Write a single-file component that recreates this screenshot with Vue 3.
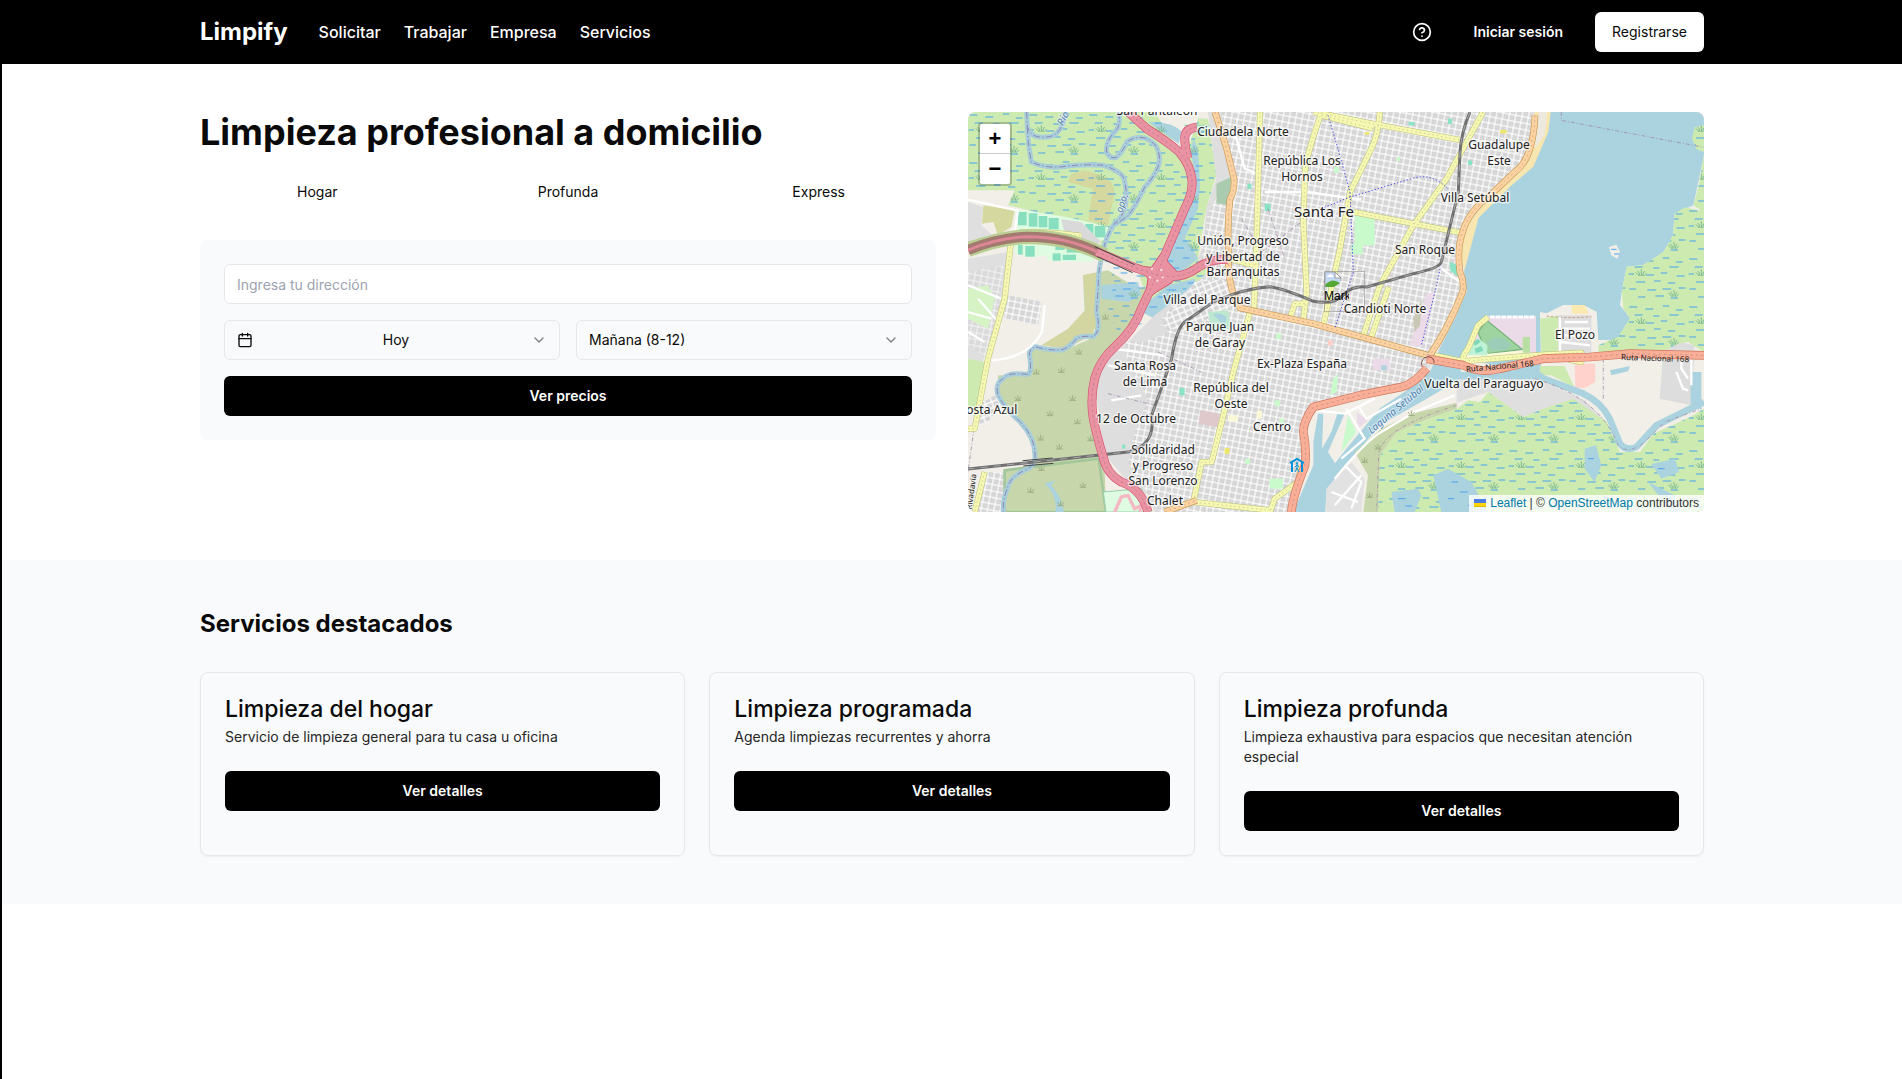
<script setup>
import { ref } from 'vue'

const links = ['Solicitar', 'Trabajar', 'Empresa', 'Servicios']
const kinds = ['Hogar', 'Profunda', 'Express']
const address = ref('')
const day = ref('Hoy')
const slot = ref('Mañana (8-12)')

const services = [
  { title: 'Limpieza del hogar', text: 'Servicio de limpieza general para tu casa u oficina' },
  { title: 'Limpieza programada', text: 'Agenda limpiezas recurrentes y ahorra' },
  { title: 'Limpieza profunda', text: 'Limpieza exhaustiva para espacios que necesitan atención especial' },
]

// Place names: centre x, first baseline, lines
const places = [
  [189, 3, ['San Pantaleón']],
  [275, 24, ['Ciudadela Norte']],
  [334, 53, ['República Los', 'Hornos']],
  [275, 133, ['Unión, Progreso', 'y Libertad de', 'Barranquitas']],
  [239, 192, ['Villa del Parque']],
  [531, 37, ['Guadalupe', 'Este']],
  [507, 90, ['Villa Setúbal']],
  [457, 142, ['San Roque']],
  [417, 201, ['Candioti Norte']],
  [252, 219, ['Parque Juan', 'de Garay']],
  [334, 256, ['Ex-Plaza España']],
  [177, 258, ['Santa Rosa', 'de Lima']],
  [263, 280, ['República del', 'Oeste']],
  [168, 311, ['12 de Octubre']],
  [304, 319, ['Centro']],
  [195, 342, ['Solidaridad', 'y Progreso', 'San Lorenzo']],
  [197, 393, ['Chalet']],
  [20, 302, ['Costa Azul']],
  [607, 227, ['El Pozo']],
  [516, 276, ['Vuelta del Paraguayo']],
]

const water = [
  'M176 0L178 45Q190 75 216 75Q250 78 266 64Q290 40 292 0',
  'M178 45Q180 100 190 150Q230 168 276 165Q350 155 406 160Q470 180 470 210Q480 250 470 290Q460 320 440 334Q410 380 406 419Q390 470 391 519Q388 560 386 600Q400 660 375 674Q345 670 326 679Q300 712 276 714Q240 715 201 704Q178 715 186 739Q192 789 176 787Q120 780 106 799Q80 815 90 849Q110 890 156 929Q200 975 201 1029Q205 1060 170 1075Q125 1095 118 1130Q104 1160 106 1200',
  'M450 0Q460 25 448 50Q410 90 416 120Q425 142 446 136Q470 110 476 90Q500 72 530 78Q560 90 568 110Q580 140 570 165Q555 200 530 225Q500 290 476 315L440 338',
]

const motorways = [
  'M480 0L536 50Q600 90 634 120Q668 160 672 205Q675 245 650 290L616 370Q590 430 572 475Q550 530 520 590Q500 650 440 705Q395 745 380 800Q366 860 376 920Q386 970 404 1030Q415 1085 460 1110Q520 1130 540 1200',
  'M686 46Q650 50 650 80Q650 110 660 140',
  'M386 419L506 469L566 489Q640 505 690 466Q730 440 780 442',
]

const primaries = [
  'M741 0Q760 60 776 110L798 200Q800 240 786 260Q778 330 781 400V460Q785 540 816 588L1036 635L1376 729',
  'M1701 10Q1700 60 1686 110Q1670 160 1640 180L1566 250Q1500 300 1484 360Q1466 410 1476 480Q1490 510 1484 540Q1440 650 1386 729',
  'M590 1200L686 1165',
]

const secondaries = [
  'M876 0L866 380L858 590',
  'M1061 0Q1015 130 1011 180L1006 330L1016 540L1006 625',
  'M1236 0Q1230 70 1210 110L1146 240L1116 410L1066 640',
  'M1545 0L1436 200L1336 340L1236 520L1186 670',
  'M1262 525L1208 680',
  'M1036 0L1240 40L1476 84',
  'M1060 10L1216 50',
  'M1156 300L1476 362',
  'M780 440L860 460',
  'M846 600L796 780L766 910L731 1050L701 1050L676 1170L906 1195',
  'M1010 575H980L966 620',
  'M0 399Q110 366 176 360Q240 358 340 372',
  'M130 380L110 560L60 740L20 950H0',
  'M1400 730L1486 748L1726 728L1840 722V750L1800 742',
  'M1486 748Q1480 735 1500 710L1530 640L1560 615',
  'M50 1080L20 1200',
  'M1000 1060L990 1110L920 1160L906 1200',
]

const trunks = [
  'M1376 769Q1340 815 1300 825L1176 850L1036 885Q1005 930 1006 960Q1016 1010 1011 1060Q975 1150 970 1200',
  'M1376 740L1486 760Q1540 785 1596 770L1726 740L1866 735L1986 725L2208 730',
]

const rails = [
  'M1506 0Q1480 60 1476 120L1471 240L1420 450Q1416 468 1336 485L1196 525Q1155 520 1130 545Q1100 580 1036 568Q950 530 906 524Q830 528 736 570L650 630Q625 650 611 740L576 840L551 910Q560 980 516 1005L486 1019L256 1044L0 1071',
]

// Short white lanes outside of the regular street grid
const lanes = [
  'M0 263L150 296L138 370',
  'M0 520L100 560M0 600L70 620M30 560L100 640M0 660L50 690',
  'M230 579L222 660Q180 740 70 745',
  'M890 240H1010L1180 262M800 60L830 170L880 190',
  'M420 760L560 790M430 710L590 730M430 865L520 850',
  'M1040 895L1130 905L1220 860M1135 890L1190 980L1120 1040M1170 880L1195 920L1300 860',
  'M1100 1100Q1200 980 1240 960L1340 900L1460 850',
  'M1130 1060L1180 1110L1150 1190M1090 1140L1170 1170M1180 1090L1100 1180',
  'M1420 470L1490 520',
  'M2140 730V770L2160 800M2125 780L2145 830L2160 835M2170 720V820',
  'M1790 630H1860M1786 650H1866M1790 670H1860M1780 690L1866 700M1776 615V720',
]

const dotted = [
  'M1080 10L1110 110L1146 240L1156 480L1100 650',
  'M1060 290L1146 255L1330 200Q1390 180 1440 230',
  'M1416 470L1406 520L1360 700',
]
const boundaries = [
  'M1780 0V25L2208 106',
  'M900 290L950 440M880 420L1000 330M820 320L900 450',
  'M1906 740V860M18 950L0 1080',
  'M1466 880Q1236 950 1232 1030L1226 1200',
  'M1700 800Q1900 860 1950 1000Q1980 1030 2030 990L2090 930L2200 890',
  'M420 845L560 880M570 720L700 780',
]

const parks = [
  [1160, 310, 60, 90, '#c8facc'], [1150, 395, 34, 32, '#c8facc'], [890, 275, 18, 22, '#8ae3c5'],
  [838, 215, 12, 16, '#8ae3c5'], [1098, 165, 14, 18, '#c8facc'], [1440, 20, 12, 16, '#8ae3c5'],
  [1322, 30, 18, 10, '#8ae3c5'], [925, 665, 14, 16, '#c8facc'], [1080, 685, 14, 16, '#ffd0c8'],
  [1215, 740, 50, 34, '#ebdbe8'], [1240, 760, 16, 14, '#aad3df'], [920, 865, 16, 18, '#c8facc'],
  [934, 920, 14, 14, '#c8facc'], [770, 1008, 14, 18, '#eee86a'], [832, 1040, 14, 16, '#c8facc'],
  [780, 910, 30, 18, '#fbf8d8'], [866, 896, 16, 24, '#fbf8d8'], [634, 828, 16, 22, '#8ae3c5'],
  [462, 998, 10, 12, '#8ae3c5'], [1190, 60, 14, 8, '#eee86a'], [1286, 135, 10, 12, '#c8facc'],
  [905, 1100, 40, 30, '#c8facc'], [1140, 1060, 16, 14, '#8ae3c5'], [1596, 54, 20, 10, '#eee86a'],
  [1640, 84, 10, 10, '#c8facc'], [1500, 145, 12, 14, '#8ae3c5'], [1836, 690, 10, 12, '#eee86a'],
]

const fields = [
  [150, 300, 26, 40], [182, 304, 26, 40], [212, 312, 26, 34], [242, 318, 30, 34], [352, 336, 24, 34],
  [380, 342, 32, 34], [150, 398, 14, 30], [172, 402, 28, 32], [262, 398, 28, 16], [296, 402, 40, 20],
  [254, 424, 24, 22], [284, 428, 40, 16],
]

const scrubMarks = [
  [205, 785], [280, 780], [150, 864], [314, 864], [246, 910], [328, 934], [218, 983], [274, 1010],
  [368, 985], [220, 1074], [345, 1125], [188, 1140], [278, 1180], [412, 620], [333, 725],
  [1330, 910], [1230, 1010], [1190, 1050], [1205, 1155],
]
</script>

<template>
  <div class="page">
    <header class="topbar">
      <div class="container bar">
        <nav class="nav" aria-label="Principal">
          <a class="brand" href="#">Limpify</a>
          <a v-for="l in links" :key="l" class="nav-link" href="#">{{ l }}</a>
        </nav>
        <div class="account">
          <button class="help" type="button" aria-label="Ayuda">
            <svg width="20" height="20" viewBox="0 0 24 24" fill="none" stroke="currentColor" stroke-width="2" stroke-linecap="round" stroke-linejoin="round">
              <circle cx="12" cy="12" r="10" />
              <path d="M9.09 9a3 3 0 0 1 5.83 1c0 2-3 3-3 3" />
              <path d="M12 17h.01" />
            </svg>
          </button>
          <button class="login" type="button">Iniciar sesión</button>
          <button class="signup" type="button">Registrarse</button>
        </div>
      </div>
    </header>

    <main>
      <section class="container hero">
        <div class="booking">
          <h1>Limpieza profesional a domicilio</h1>
          <div class="kinds">
            <button v-for="k in kinds" :key="k" type="button">{{ k }}</button>
          </div>
          <form class="quote" @submit.prevent>
            <input v-model="address" class="field" type="text" placeholder="Ingresa tu dirección" aria-label="Dirección" />
            <div class="pair">
              <div class="picker">
                <svg class="cal" width="16" height="16" viewBox="0 0 24 24" fill="none" stroke="currentColor" stroke-width="2" stroke-linecap="round" stroke-linejoin="round">
                  <path d="M8 2v4M16 2v4M3 10h18" />
                  <rect x="3" y="4" width="18" height="18" rx="2" />
                </svg>
                <select v-model="day" class="field day" aria-label="Día">
                  <option>Hoy</option>
                </select>
                <svg class="chev" width="16" height="16" viewBox="0 0 24 24" fill="none" stroke="currentColor" stroke-width="2" stroke-linecap="round" stroke-linejoin="round">
                  <path d="m6 9 6 6 6-6" />
                </svg>
              </div>
              <div class="picker">
                <select v-model="slot" class="field" aria-label="Horario">
                  <option>Mañana (8-12)</option>
                </select>
                <svg class="chev" width="16" height="16" viewBox="0 0 24 24" fill="none" stroke="currentColor" stroke-width="2" stroke-linecap="round" stroke-linejoin="round">
                  <path d="m6 9 6 6 6-6" />
                </svg>
              </div>
            </div>
            <button class="solid" type="submit">Ver precios</button>
          </form>
        </div>

        <div class="map">
          <svg class="tiles" viewBox="0 0 736 400" preserveAspectRatio="xMidYMid slice">
            <defs>
              <pattern id="blocks" width="19" height="19" patternUnits="userSpaceOnUse" patternTransform="rotate(11)">
                <rect width="19" height="19" fill="#fff" />
                <rect x="2" y="2" width="15" height="15" fill="#c6c4c4" />
                <rect x="3" y="3" width="13" height="13" fill="#d8d7d7" />
              </pattern>
              <pattern id="blocks2" width="20" height="17" patternUnits="userSpaceOnUse" patternTransform="rotate(-22)">
                <rect width="20" height="17" fill="#fff" />
                <rect x="2" y="2" width="16" height="13" fill="#d6d5d5" />
              </pattern>
              <pattern id="marsh" width="180" height="144" patternUnits="userSpaceOnUse">
                <path d="M4 9h24M52 15h24M104 6h20M144 18h20M20 33h24M76 36h18M124 33h28M2 54h16M54 57h24M98 51h20M146 60h24M24 78h28M78 75h20M120 81h22M4 99h20M58 102h26M104 99h26M152 96h20M30 123h22M82 120h26M128 126h22" stroke="#4aa3ee" stroke-width="3" fill="none" />
                <g fill="none" stroke="#7db893" stroke-width="3">
                  <path d="M36 60q-1-10-7-15M40 60V40M44 60q0-10 6-15M33 60q-4-8-10-10M47 60q4-6 8-8" />
                  <path d="M134 122q-1-10-7-15M138 122V102M142 122q0-10 6-15M131 122q-4-8-10-10M145 122q4-6 8-8" />
                </g>
              </pattern>
            </defs>

            <g transform="scale(.333333)">
              <rect width="2208" height="1200" fill="#f2efe9" />

              <path d="M0 0H560L650 140L690 20H720L745 190L715 290L690 440L730 480L640 540L540 570L500 450L390 420L410 350L290 320L120 280L140 235L0 235Z" fill="#cdebb0" />
              <path d="M310 185L350 175L400 190L430 210L440 240L420 340L360 325L375 230L300 210Z" fill="#d6d99f" />
              <path d="M345 490L420 475L510 530L560 520L520 620L400 740L365 830L370 930L400 1030L410 1060L414 1200H110V1075L200 1065L205 1000L140 920L90 840L90 790H180L185 710L290 715L390 670L350 600Z" fill="#c8d7ab" />
              <path d="M345 490L400 478L388 600L375 670L290 710L220 700L300 650L355 590Z" fill="#d3d6a0" />
              <path d="M540 30Q620 30 640 60L632 95Z" fill="#aad3df" />
              <path d="M650 40H730L736 60L690 56Z" fill="#c5f0dd" stroke="#8fcfae" stroke-width="3" />
              <path d="M676 80L690 110L696 220L690 290L650 380L670 400L690 440L640 480L592 470L596 420L640 330L672 250L682 190L668 120Z" fill="#aad3df" />
              <path d="M540 570L600 520L680 500L690 540L620 600L560 620L520 600Z" fill="#aad3df" />
              <path d="M400 520L510 510L520 550L480 570L400 560Z" fill="#aad3df" />
              <path d="M0 0H560L650 140L690 20H720L745 190L715 290L690 440L730 480L640 540L540 620L460 680L420 600L440 500L400 440L410 350L290 320L120 280L140 235L0 235Z" fill="url(#marsh)" />
              <path d="M140 290L300 316L420 345L412 385L150 360Z" fill="#dffce2" />
              <path d="M140 392L350 410L380 435L376 450L240 446L236 430L200 434L140 425Z" fill="#dffce2" />
              <rect v-for="(f, i) in fields" :key="'f' + i" :x="f[0]" :y="f[1]" :width="f[2]" :height="f[3]" fill="#88dfbf" />
              <path d="M46 280L140 295L130 345L90 370L76 330L42 335Z" fill="#d6d99f" />
              <path d="M280 322L340 330L400 390L380 400L290 365Z" fill="#dad9d9" />
              <path d="M0 270L46 285L40 340L90 385L0 400ZM0 440L120 420L100 580L40 760L0 770Z" fill="#e0dfdf" />
              <path d="M112 548L222 570L210 640L108 620Z" fill="url(#blocks)" />
              <path d="M0 480L110 460L90 600L60 740L0 700Z" fill="url(#blocks)" opacity=".6" />
              <path d="M0 530L60 520L80 560L60 650L0 620Z" fill="#d5f3c4" />
              <path d="M0 740L50 750L36 880L0 890Z" fill="#cdebb0" />
              <path d="M30 880L80 850L98 880L60 930L30 940Z" fill="url(#blocks2)" />
              <path d="M44 1080H108V1200H30Z" fill="url(#blocks)" />
              <path d="M110 1075L392 1040L414 1200H110Z" fill="none" stroke="#a3c79b" stroke-width="8" />
              <path d="M230 1115L262 1105L250 1120Q290 1170 286 1200H262Q270 1150 230 1115Z" fill="#aad3df" />

              <path d="M720 0L735 120L745 200L715 290L705 400L690 440L720 480L640 550L560 610L480 690L400 760L385 850L400 960L420 1040L480 1110L540 1150L560 1200H960L1000 1100L1020 950L1040 890L1320 830L1410 740L1490 560L1480 470L1520 330L1620 220L1690 160L1740 50V0Z" fill="#dfdede" />
              <path d="M760 0L790 190L720 300L705 400L700 440L730 480L640 550L580 620L600 660L530 690L470 690L480 760L540 860L500 960L480 1050L530 1130L560 1180L580 1200H960L1000 1100L1000 950L1040 890L1320 830L1400 740L1480 560L1470 470L1500 330L1600 220L1670 160L1690 50V0Z" fill="url(#blocks)" />
              <path d="M680 510L790 500L800 580L640 660L580 640L640 560Z" fill="url(#blocks2)" />
              <path d="M745 215L790 195L784 280L746 274Z" fill="#aacbaf" />
              <path d="M720 600L780 595L790 650L730 660Z" fill="#bde8cf" />
              <path d="M736 606Q760 600 776 615L770 640Q745 620 736 606Z" fill="#aad3df" />
              <path d="M696 895L756 905L750 945L692 935Z" fill="#dfc9cb" />
              <path d="M1376 545L1400 540L1362 705L1324 700Z" fill="#ebdbe8" />
              <path d="M1336 620L1362 560L1356 640L1340 660Z" fill="#c9c8b4" />
              <path d="M1444 450L1474 460L1472 495L1448 478Z" fill="#8ae3c5" />
              <path d="M1700 0H1750L1745 60L1700 165L1630 225L1534 320L1514 400L1490 478L1480 440L1490 350L1560 260L1660 175L1690 110Z" fill="#f7e6b0" />
              <path d="M1712 0H1738L1730 70L1700 110Z" fill="#eee9df" />
              <rect v-for="(p, i) in parks" :key="'p' + i" :x="p[0]" :y="p[1]" :width="p[2]" :height="p[3]" :fill="p[4]" />
              <path d="M1096 800L1110 786L1106 840L1086 850Z" fill="#c8facc" />

              <path d="M1748 0L1741 59L1696 164L1626 224L1531 319L1510 400L1488 479L1496 539L1466 610L1416 709L1386 779L1326 829L1236 889L1136 1009L1101 1054L1080 1020L1130 905H1108L1090 960L1062 1010L1066 905H1050L1036 990V1060L976 1200H1072L1076 1130L1176 1010L1236 940L1376 860L1466 808H1720L1716 600L1736 604L1786 579H1846L1886 599L1891 684H1946L1986 619L1956 579L1961 539L1976 464L2026 459L2086 420L2115 370L2120 305L2176 280L2208 130V0Z" fill="#aad3df" />
              <path d="M1486 740L1526 640L1560 612H1704V725L1600 745L1486 752Z" fill="#ebdbe8" />
              <path d="M1556 625L1662 712L1560 725L1546 700L1530 660Z" fill="#9fd3a0" stroke="#78b57d" stroke-width="4" />
              <path d="M1555 690Q1600 660 1630 700L1610 715H1570Z" fill="#9bcdb8" />
              <path d="M1490 730L1530 680L1560 725L1670 715L1680 740L1500 750Z" fill="#fbf8d8" />
              <path d="M1510 700L1534 680L1558 700V730H1500Z" fill="#bff2d7" />
              <path d="M1520 710L1540 702L1546 716L1524 724ZM1516 690L1530 680L1538 690L1520 702Z" fill="#7fd9b8" />
              <path d="M1566 615H1700" stroke="#fff" stroke-width="9" stroke-dasharray="14 3" />
              <path d="M1664 675H1686V722H1664Z" fill="#b9e0a2" />
              <path d="M1716 620L1770 612V725H1720Z" fill="#cdebb0" />
              <path d="M1770 610H1870V725H1770Z" fill="#dedddd" />
              <path d="M1810 579H1850L1862 605H1812Z" fill="#fbe9b0" />
              <path d="M1736 612Q1790 620 1870 614" stroke="#c0a080" stroke-width="3" stroke-dasharray="8 5" fill="none" />
              <path d="M1466 770L1700 785L1716 800L1466 808Z" fill="#aad3df" />
              <path d="M1470 745H1520L1640 775L1480 780Z" fill="#f2efe9" />
              <path d="M1466 802H1710L1850 865L1920 935L1820 870L1726 890L1666 915L1561 840L1466 872Z" fill="#e0dfdf" />
              <path d="M2075 860L2086 720L2140 690L2180 700L2172 880Z" fill="#dedddd" />
              <path d="M1820 755H1882V810L1850 828H1822Z" fill="#ffd2cc" />
              <path d="M1926 775L1986 762L1980 778L1930 790Z" fill="#aad3df" />
              <path d="M1716 762H1790L1820 828L1750 790H1716Z" fill="#cdebb0" />
              <path d="M1923 405L1945 398L1956 420L1948 440L1930 430Z" fill="#f2efe9" />
              <path d="M1930 412h16M1938 426h16" stroke="#4aa3ee" stroke-width="3" />

              <g v-for="paint in ['#cdebb0', 'url(#marsh)']" :key="paint" :fill="paint">
                <path d="M2208 40L2180 46L2172 80L2186 112L2208 120Z" />
                <path d="M2208 130L2190 230L2176 280L2200 296L2150 286L2120 305L2115 370L2086 420L2026 459L1976 464L1961 539L1966 590L1986 619L1950 675L1891 700V725L2080 722L2130 695L2160 690L2208 720Z" />
                <path d="M1232 1079L1236 1030L1286 960L1386 919L1466 890L1501 865L1536 870L1561 840L1666 915L1726 890L1816 860L1916 930L1956 1020H2016L2056 965L2166 915L2208 890V1200H1230Z" />
              </g>
              <path d="M1396 1090L1440 1070L1510 1110L1560 1200H1420ZM1270 1140L1350 1130L1360 1150L1340 1200H1280ZM1850 1010L1884 1000L1900 1060L1880 1110L1850 1070ZM2050 1056L2120 1040L2134 1080L2080 1100ZM2040 1110L2120 1150L2140 1200H2110Z" fill="#aad3df" />
              <path d="M1290 1160h22M1312 1182h20M1450 1110h20M1476 1140h24M1440 1160h18M1500 1180h20M1860 1040h18M2070 1070h20" stroke="#4aa3ee" stroke-width="3" />
              <path d="M1186 1200L1200 1090L1160 1020L1240 950L1330 905L1466 872V890L1386 919L1286 960L1236 1030L1230 1200Z" fill="#c8d7ab" />
              <path d="M1076 1130L1150 1050L1190 1100L1180 1200H1072Z" fill="#e3e2e2" />
              <path d="M1140 910L1165 960L1120 1020Z" fill="#c8facc" />
              <path d="M1165 900L1200 925L1170 950Z" fill="#ebdbe8" />
              <path d="M1695 779L1726 799L1846 845Q1900 870 1925 920L1956 995Q1976 1020 2006 1004L2066 940L2166 890L2208 870" fill="none" stroke="#aad3df" stroke-width="20" />
              <path d="M2184 780V890" stroke="#aad3df" stroke-width="32" />
              <path d="M406 1140L520 1130L550 1200H414Z" fill="#dffce2" stroke="#9bcfae" stroke-width="3" />
              <path d="M440 1200L460 1155L480 1150L500 1190L520 1180L515 1200" fill="none" stroke="#f3b8c4" stroke-width="10" />

              <g fill="none" stroke-linejoin="round">
                <path v-for="d in water" :key="d" :d="d" stroke="#a8cddb" stroke-width="15" />
                <path v-for="d in water" :key="'b' + d" :d="d" stroke="#8f86b0" stroke-width="3" stroke-dasharray="20 7 4 7" />
                <path v-for="d in lanes" :key="d" :d="d" stroke="#fff" stroke-width="7" />
                <path v-for="d in boundaries" :key="d" :d="d" stroke="#a08aa8" stroke-width="3" stroke-dasharray="12 6 3 6" opacity=".8" />

                <path v-for="d in secondaries" :key="'c' + d" :d="d" stroke="#b9bd7c" stroke-width="18" />
                <path v-for="d in secondaries" :key="d" :d="d" stroke="#f5f8b0" stroke-width="15" />
                <path v-for="d in secondaries" :key="'d' + d" :d="d" stroke="#cfc79a" stroke-width="3" stroke-dasharray="4 9" />
                <path v-for="d in primaries" :key="'c' + d" :d="d" stroke="#c79a58" stroke-width="20" />
                <path v-for="d in primaries" :key="d" :d="d" stroke="#fbd2a0" stroke-width="16" />
                <path v-for="d in primaries" :key="'d' + d" :d="d" stroke="#d5ac8c" stroke-width="3" stroke-dasharray="6 9" />
                <path v-for="d in dotted" :key="d" :d="d" stroke="#4848e8" stroke-width="3" stroke-dasharray="4 6" />

                <path v-for="d in rails" :key="d" :d="d" stroke="#707070" stroke-width="9" />
                <path v-for="d in rails" :key="'w' + d" :d="d" stroke="#c4c4c4" stroke-width="2" stroke-dasharray="22 18" />
                <path d="M164 1046L254 1038M166 1062L256 1054" stroke="#444" stroke-width="3" />

                <path v-for="d in trunks" :key="'c' + d" :d="d" stroke="#cf7358" stroke-width="26" />
                <path v-for="d in trunks" :key="d" :d="d" stroke="#f8ae97" stroke-width="22" />
                <path v-for="d in trunks" :key="'d' + d" :d="d" stroke="#cf9080" stroke-width="3" stroke-dasharray="6 10" />
                <path d="M1362 764Q1356 738 1380 734Q1400 736 1398 752" stroke="#7c4a40" stroke-width="3" />

                <path d="M0 414Q90 378 176 374Q300 374 410 430" stroke="#b9cf94" stroke-width="44" />
                <path d="M0 414Q90 378 176 374Q300 374 396 424" stroke="#a37a70" stroke-width="30" />
                <path d="M0 414Q90 378 176 374Q300 374 396 424" stroke="#dd8796" stroke-width="9" />
                <path v-for="d in motorways" :key="'c' + d" :d="d" stroke="#d55673" stroke-width="27" />
                <path d="M506 462L550 466L582 420L600 450L630 482L612 512L566 540L530 566L540 500Z" fill="#e892a2" stroke="#d25472" stroke-width="3" />
                <path v-for="d in motorways" :key="d" :d="d" stroke="#e892a2" stroke-width="23" />
                <path v-for="d in motorways" :key="'d' + d" :d="d" stroke="#c27890" stroke-width="3" stroke-dasharray="6 10" />
                <path d="M380 404L500 458M388 434L494 482" stroke="#444" stroke-width="3" />
                <path d="M552 470h.1M580 474h.1M546 496h.1M568 506h.1M584 496h.1" stroke="#f6dfe3" stroke-width="7" stroke-linecap="round" />
                <path v-for="(s, i) in scrubMarks" :key="i" :d="`M${s[0]} ${s[1]}v-14m-3 14q-2-7-7-9m13 9q2-7 7-9m-20 10h20`" stroke="#9db083" stroke-width="3" />
              </g>
            </g>

            <g class="places">
              <text v-for="p in places" :key="p[2][0]" :x="p[0]" :y="p[1]">
                <tspan v-for="(line, i) in p[2]" :key="line" :x="p[0]" :y="p[1] + Math.round(i * 15.5)">{{ line }}</tspan>
              </text>
              <text class="city" x="356" y="105">Santa Fe</text>
            </g>
            <text class="road" transform="translate(532 257) rotate(-5)">Ruta Nacional 168</text>
            <text class="road" transform="translate(687 249) rotate(2)">Ruta Nacional 168</text>
            <text class="road" transform="translate(6 380) rotate(-82)">Rivadavia</text>
            <text class="river" transform="translate(430 300) rotate(-40)">Laguna Setúbal</text>
            <text class="river" transform="translate(98 8) rotate(-62)">Río</text>
            <text class="river" transform="translate(157 92) rotate(-72)">opo,</text>

            <g transform="translate(322 346)" fill="none" stroke="#0092da">
              <path d="M0 5L7 1L14 5M2 4V14M12 4V14" stroke-width="2" />
              <path d="M7 6V10L5 14M7 10L9 14M5 9L7 7L9 9" stroke-width="1" />
              <circle cx="7" cy="5" r="1" fill="#0092da" stroke="none" />
            </g>
          </svg>

          <div class="pin">
            <div class="pin-shadow"></div>
            <svg width="18" height="17" viewBox="0 0 18 17">
              <path d="M1 1H11L17 7V10L13 13L10 16H1Z" fill="#c5d8f5" />
              <path d="M3 6Q3 4 5 4Q6 2 8 4Q10 4 9 6Z" fill="#fff" />
              <path d="M1 16V14Q8 6 16 12L10 16Z" fill="#56a836" />
              <path d="M1 16V1H11L17 7V10" fill="none" stroke="#a8a8a8" />
              <path d="M11 1V7H17Z" fill="#fff" stroke="#999" />
            </svg>
            <span>Mark</span>
          </div>

          <div class="zoom">
            <button type="button" aria-label="Acercar">+</button>
            <button type="button" aria-label="Alejar">−</button>
          </div>

          <div class="credit">
            <svg width="12" height="8" viewBox="0 0 12 8"><path fill="#4C7BE1" d="M0 0h12v4H0z" /><path fill="#FFD500" d="M0 4h12v3H0z" /><path fill="#E0BC00" d="M0 7h12v1H0z" /></svg>
            <a href="#">Leaflet</a> | © <a href="#">OpenStreetMap</a> contributors
          </div>
        </div>
      </section>

      <section class="featured">
        <div class="container">
          <h2>Servicios destacados</h2>
          <div class="cards">
            <article v-for="s in services" :key="s.title" class="card">
              <h3>{{ s.title }}</h3>
              <p>{{ s.text }}</p>
              <button class="solid" type="button">Ver detalles</button>
            </article>
          </div>
        </div>
      </section>
    </main>
  </div>
</template>

<style>
body {
  background: #fff;
}
</style>

<style scoped>
.page,
.page * {
  box-sizing: border-box;
}
.page {
  min-height: 100vh;
  border-left: 2px solid #000;
  background: #fff;
  color: #0a0a0a;
  font: 14px/20px Inter, "Liberation Sans", sans-serif;
}
button,
input,
select {
  font: inherit;
  color: inherit;
}
button {
  border: 0;
  background: none;
  padding: 0;
  cursor: pointer;
}
h1,
h2,
h3,
p {
  margin: 0;
}
.container {
  max-width: 1536px;
  margin: 0 auto;
  padding: 0 16px;
}

.topbar {
  background: #000;
  color: #fff;
}
.bar {
  height: 64px;
  display: flex;
  align-items: center;
  justify-content: space-between;
}
.nav {
  display: flex;
  align-items: center;
  gap: 23px;
}
.nav a {
  color: #fff;
  text-decoration: none;
}
.brand {
  font-size: 24px;
  line-height: 32px;
  font-weight: 700;
  margin-right: 8px;
}
.nav-link {
  font-size: 16px;
  line-height: 24px;
  font-weight: 500;
}
.account {
  display: flex;
  align-items: center;
  gap: 16px;
}
.account button {
  height: 40px;
  border-radius: 6px;
  padding: 0 16px;
}
.account .help {
  width: 40px;
  padding: 0;
  display: grid;
  place-items: center;
}
.login {
  font-weight: 600;
}
.account .signup {
  min-width: 109px;
  background: #fff;
  color: #0a0a0a;
}

.hero {
  display: grid;
  grid-template-columns: 1fr 1fr;
  gap: 32px;
  padding-top: 48px;
  padding-bottom: 48px;
}
h1 {
  font-size: 36px;
  line-height: 40px;
  font-weight: 700;
  margin-bottom: 16px;
}
.kinds {
  display: grid;
  grid-template-columns: repeat(3, 1fr);
  gap: 16px;
  margin-bottom: 24px;
}
.kinds button {
  height: 48px;
}
.quote {
  display: flex;
  flex-direction: column;
  gap: 16px;
  padding: 24px;
  border-radius: 8px;
  background: #f9fafb;
}
.field {
  width: 100%;
  height: 40px;
  padding: 0 12px;
  border: 1px solid #e5e7eb;
  border-radius: 6px;
  background: #fff;
  outline: 0;
}
.field::placeholder {
  color: #9ca3af;
}
.pair {
  display: grid;
  grid-template-columns: 1fr 1fr;
  gap: 16px;
}
.picker {
  position: relative;
}
.picker .field {
  display: block;
  appearance: none;
  background: transparent;
}
.picker .day {
  padding: 0 28px 0 36px;
  text-align: center;
  text-align-last: center;
}
.picker svg {
  position: absolute;
  top: 12px;
  pointer-events: none;
}
.cal {
  left: 13px;
}
.chev {
  right: 13px;
  opacity: 0.5;
}
.solid {
  height: 40px;
  width: 100%;
  border-radius: 6px;
  background: #000;
  color: #fff;
  font-weight: 600;
}

.map {
  position: relative;
  height: 400px;
  border-radius: 8px;
  overflow: hidden;
  background: #ddd;
}
.tiles {
  display: block;
  width: 100%;
  height: 100%;
}
.tiles text {
  font-family: "Noto Sans", sans-serif;
  text-anchor: middle;
  paint-order: stroke;
  stroke-linejoin: round;
}
.places text {
  font-size: 12px;
  fill: #222;
  stroke: rgba(255, 255, 255, 0.6);
  stroke-width: 3px;
}
.places .city {
  font-size: 15px;
}
.tiles .road {
  font-size: 8px;
  fill: #222;
}
.tiles .river {
  font-size: 10px;
  font-style: italic;
  fill: #4f7fb0;
  stroke: rgba(255, 255, 255, 0.5);
  stroke-width: 2px;
}
.pin {
  position: absolute;
  left: calc(50% - 12px);
  top: 159px;
  width: 25px;
  height: 41px;
  color: #000;
  font: 12px/16px "Liberation Sans", sans-serif;
}
.pin svg {
  display: block;
}
.pin span {
  display: block;
  width: 25px;
  overflow: hidden;
}
.pin-shadow {
  position: absolute;
  width: 41px;
  height: 41px;
  border: 1px solid rgba(128, 128, 128, 0.5);
}
.zoom {
  position: absolute;
  left: 10px;
  top: 10px;
  border: 2px solid rgba(0, 0, 0, 0.2);
  border-radius: 4px;
  background-clip: padding-box;
}
.zoom button {
  display: block;
  width: 30px;
  height: 30px;
  background: #fff;
  color: #000;
  font: bold 22px/30px "Liberation Sans", sans-serif;
}
.zoom button:first-child {
  border-bottom: 1px solid #ccc;
  border-radius: 2px 2px 0 0;
}
.zoom button:last-child {
  border-radius: 0 0 2px 2px;
}
.credit {
  position: absolute;
  right: 0;
  bottom: 0;
  padding: 0 5px;
  background: rgba(255, 255, 255, 0.8);
  color: #333;
  font: 12px/17px "Liberation Sans", sans-serif;
}
.credit svg {
  margin-right: 4px;
}
.credit a {
  color: #0078a8;
  text-decoration: none;
}

.featured {
  padding: 48px 0;
  background: #f9fafb;
}
h2 {
  font-size: 24px;
  line-height: 32px;
  font-weight: 700;
  margin-bottom: 32px;
}
.cards {
  display: grid;
  grid-template-columns: repeat(3, 1fr);
  gap: 24px;
}
.card {
  padding: 24px;
  border: 1px solid #e5e7eb;
  border-radius: 8px;
  box-shadow: 0 1px 2px rgba(0, 0, 0, 0.05);
}
h3 {
  font-size: 23px;
  line-height: 24px;
  font-weight: 500;
  margin-bottom: 6px;
}
.card p {
  color: #262626;
  margin-bottom: 24px;
}
</style>
